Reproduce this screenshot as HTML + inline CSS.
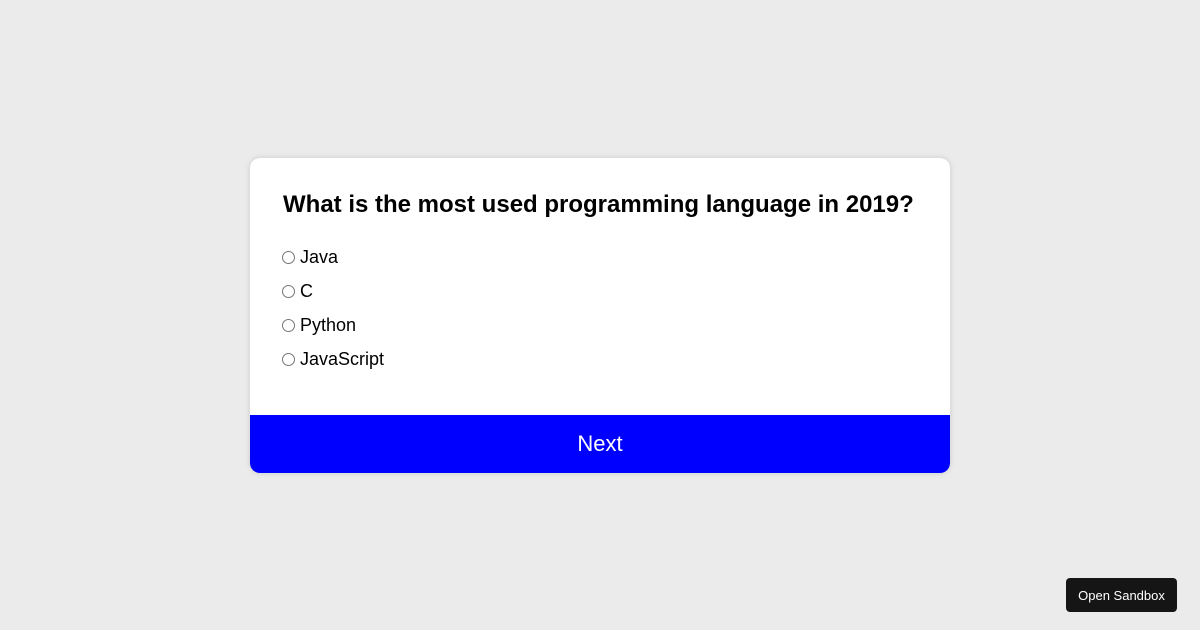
<!DOCTYPE html>
<html><head><style>
body{margin:0;width:1200px;height:630px;background:#ebebeb;font-family:"Liberation Sans",sans-serif;position:relative;overflow:hidden}
.card{position:absolute;left:250px;top:158px;width:700px;height:315px;background:#fff;border-radius:10px;box-shadow:0 0 6px rgba(0,0,0,0.15);overflow:hidden}
h2{position:absolute;left:33px;top:33px;margin:0;font-size:24px;font-weight:bold;color:#000;white-space:nowrap}
.opt{position:absolute;left:32px;height:20px;display:flex;align-items:center;font-size:18px;color:#000}
.r{width:11px;height:11px;border:1px solid #767676;border-radius:50%;margin-right:5px;background:#fff}
.btn{position:absolute;left:0;top:257px;width:700px;height:58px;background:#0000ff;color:#fff;font-size:22px;display:flex;align-items:center;justify-content:center}
.sb{position:absolute;left:1066px;top:578px;width:111px;height:34px;background:#151515;border-radius:4px;color:#fff;font-size:13px;display:flex;align-items:center;justify-content:center}
</style></head><body>
<div class="card">
<h2>What is the most used programming language in 2019?</h2>
<div class="opt" style="top:89px"><span class="r"></span>Java</div>
<div class="opt" style="top:123px"><span class="r"></span>C</div>
<div class="opt" style="top:157px"><span class="r"></span>Python</div>
<div class="opt" style="top:191px"><span class="r"></span>JavaScript</div>
<div class="btn">Next</div>
</div>
<div class="sb">Open Sandbox</div>
</body></html>
